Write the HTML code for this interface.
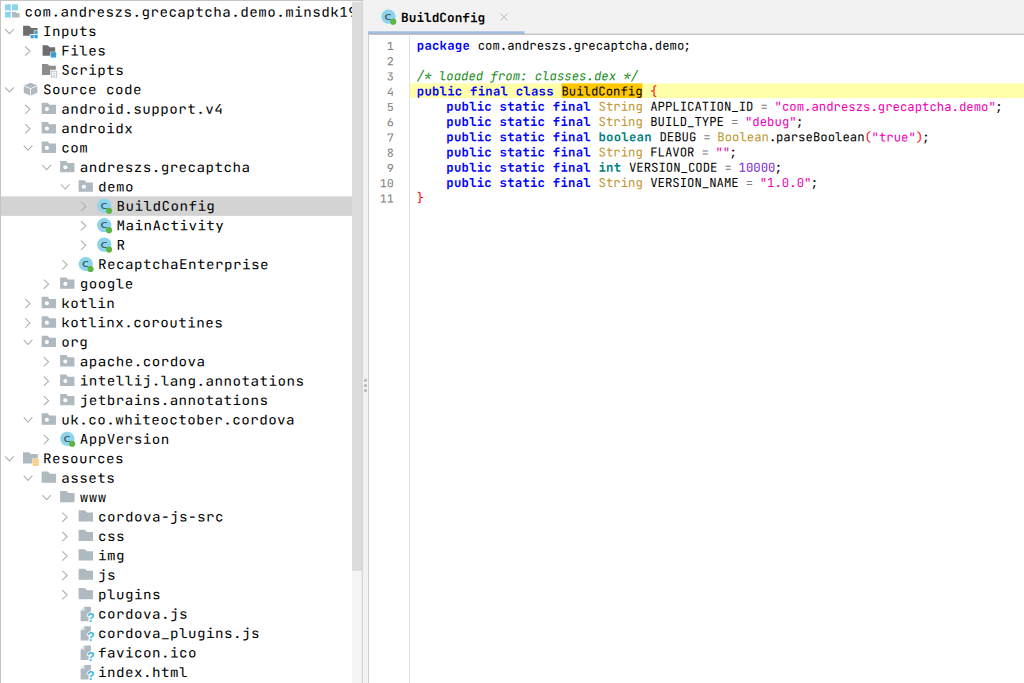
<!DOCTYPE html>
<html><head><meta charset="utf-8"><title>jadx-gui</title>
<style>
*{box-sizing:border-box;margin:0;padding:0}
html,body{width:1024px;height:683px;overflow:hidden;background:#f2f2f2}
svg{display:block;position:absolute;left:0;top:0}
text{font-family:"JetBrains Mono", "DejaVu Sans Mono", "Liberation Mono", monospace;font-variant-ligatures:none;font-feature-settings:"liga" 0,"calt" 0;fill:#000;white-space:pre}
.ig{font-family:"DejaVu Sans","Liberation Sans",sans-serif;font-size:10.4px;font-weight:normal;fill:#40535e;stroke:#40535e;stroke-width:0.1px;text-anchor:middle}
.iq{font-family:"Liberation Sans",sans-serif;font-size:12.5px;font-weight:bold;fill:#40b6e0;stroke:#fff;stroke-width:1.5px;paint-order:stroke;text-anchor:middle}
.ch{fill:none;stroke:#b0b0b0;stroke-width:1.1}
.tt text{font-size:13.4px;letter-spacing:0.426px;font-weight:380}
.tab{font-size:12.75px;font-weight:bold}
.ln{font-size:11.05px;fill:#808080;text-anchor:end}
.cl{font-size:12.3px;font-weight:370}
.k{fill:#0000ff;font-weight:bold;letter-spacing:0.23px}
.ty{fill:#bf952c;font-weight:400}
.pr{fill:#008080;font-weight:bold;letter-spacing:0.23px}
.op{fill:#808080;letter-spacing:-0.37px}
.sp{letter-spacing:-0.37px}
.st{fill:#ee00b4}
.nu{fill:#7d26cd}
.br{fill:#ff0000;letter-spacing:-0.37px}
.cm{fill:#178a17;font-style:italic}
</style></head><body>
<svg width="1024" height="683" viewBox="0 0 1024 683">
<defs><clipPath id="tc"><rect x="0" y="0" width="352" height="683"/></clipPath>
<linearGradient id="bl" x1="0" y1="0" x2="0" y2="1"><stop offset="0" stop-color="#b3cbe7"/><stop offset="1" stop-color="#8fb1da"/></linearGradient>
<linearGradient id="sh" x1="0" y1="0" x2="0" y2="1"><stop offset="0" stop-color="#f2f2f2"/><stop offset="1" stop-color="#e0e0e0"/></linearGradient></defs>
<rect x="0" y="0" width="1024" height="683" fill="#f2f2f2"/>
<g clip-path="url(#tc)"><rect x="0" y="0" width="352" height="683" fill="#fff"/>
<rect x="0" y="196.35" width="352" height="19.52" fill="#d3d3d3"/>
<g transform="translate(5.00 2.15)"><rect x="0" y="2.2" width="5.8" height="6.1" fill="#8cd3ec"/><rect x="7" y="2.2" width="6" height="6.1" fill="#8cd3ec"/><rect x="0" y="9.8" width="5.8" height="5.6" fill="#8cd3ec"/><path d="M7 9.8h3.4l1.9 1.4h2.3v4.2H7z" fill="#aeb9c0"/></g>
<g transform="translate(9.45 21.57)"><path class="ch" d="M-4.35 7.5L0 12.1L4.35 7.5"/></g>
<g transform="translate(23.20 21.57)"><path d="M-0.1 4.2h6l2.3 2.2H14.3v2.2H10.6v3.9H6.6v1.6H-0.1z" fill="#6e6e6e"/><rect x="11.15" y="9.15" width="3.3" height="3.2" fill="#389fd6"/><rect x="7.3" y="13.3" width="3.15" height="3.4" fill="#389fd6"/><rect x="11.15" y="13.3" width="3.3" height="3.4" fill="#389fd6"/></g>
<g transform="translate(28.10 40.99)"><path class="ch" d="M-2.9 5.5L1.9 10.1L-2.9 14.7"/></g>
<g transform="translate(41.67 40.99)"><path d="M0.9 4.35h4.9l2.4 1.9h5.3v4.4H8.6v4H0.9z" fill="#6e6e6e"/><rect x="9.1" y="11.15" width="5.4" height="5.4" fill="#389fd6"/></g>
<g transform="translate(41.67 60.41)"><path d="M0.3 3.5h5.2l2.4 1.8h6.3v4.1H8.5v5.1H0.3z" fill="#8c8c8c"/><rect x="9.6" y="10.75" width="5.4" height="5.9" fill="#fff" stroke="#b8c3cc" stroke-width="1"/><path d="M11.1 13h2.4M11.1 14.9h2.4" stroke="#b8c3cc" stroke-width="0.9"/></g>
<g transform="translate(9.45 79.83)"><path class="ch" d="M-4.35 7.5L0 12.1L4.35 7.5"/></g>
<g transform="translate(23.20 79.83)"><path d="M7.35 2.9L14.1 5.7V13L7.35 16L0.6 13V5.7z" fill="#aeb9c0"/><path d="M0.9 6.0L7.35 8.8L13.8 6.0M7.35 8.8V15.7" stroke="#fff" stroke-width="0.9" fill="none"/></g>
<g transform="translate(28.10 99.25)"><path class="ch" d="M-2.9 5.5L1.9 10.1L-2.9 14.7"/></g>
<g transform="translate(41.67 99.25)"><path d="M0 3.4h6.1l1.6 2.1h6.6v9.3H0z" fill="#aeb9c0"/><circle cx="5.2" cy="9.8" r="2.05" fill="#fff"/></g>
<g transform="translate(28.10 118.67)"><path class="ch" d="M-2.9 5.5L1.9 10.1L-2.9 14.7"/></g>
<g transform="translate(41.67 118.67)"><path d="M0 3.4h6.1l1.6 2.1h6.6v9.3H0z" fill="#aeb9c0"/><circle cx="5.2" cy="9.8" r="2.05" fill="#fff"/></g>
<g transform="translate(28.05 138.09)"><path class="ch" d="M-4.35 7.5L0 12.1L4.35 7.5"/></g>
<g transform="translate(41.67 138.09)"><path d="M0 3.4h6.1l1.6 2.1h6.6v9.3H0z" fill="#aeb9c0"/><circle cx="5.2" cy="9.8" r="2.05" fill="#fff"/></g>
<g transform="translate(46.65 157.51)"><path class="ch" d="M-4.35 7.5L0 12.1L4.35 7.5"/></g>
<g transform="translate(60.14 157.51)"><path d="M0 3.4h6.1l1.6 2.1h6.6v9.3H0z" fill="#aeb9c0"/><circle cx="5.2" cy="9.8" r="2.05" fill="#fff"/></g>
<g transform="translate(65.25 176.93)"><path class="ch" d="M-4.35 7.5L0 12.1L4.35 7.5"/></g>
<g transform="translate(78.61 176.93)"><path d="M0 3.4h6.1l1.6 2.1h6.6v9.3H0z" fill="#aeb9c0"/><circle cx="5.2" cy="9.8" r="2.05" fill="#fff"/></g>
<g transform="translate(83.90 196.35)"><path class="ch" d="M-2.9 5.5L1.9 10.1L-2.9 14.7"/></g>
<g transform="translate(97.08 196.35)"><circle cx="7.15" cy="9.45" r="7.15" fill="#8cd3ec"/><text class="ig" transform="translate(6.75 12.45) scale(1.2 1)">c</text><circle cx="11.95" cy="14.4" r="3.1" fill="#5fb543"/></g>
<g transform="translate(83.90 215.77)"><path class="ch" d="M-2.9 5.5L1.9 10.1L-2.9 14.7"/></g>
<g transform="translate(97.08 215.77)"><circle cx="7.15" cy="9.45" r="7.15" fill="#8cd3ec"/><text class="ig" transform="translate(6.75 12.45) scale(1.2 1)">c</text><circle cx="11.95" cy="14.4" r="3.1" fill="#5fb543"/></g>
<g transform="translate(83.90 235.19)"><path class="ch" d="M-2.9 5.5L1.9 10.1L-2.9 14.7"/></g>
<g transform="translate(97.08 235.19)"><circle cx="7.15" cy="9.45" r="7.15" fill="#8cd3ec"/><text class="ig" transform="translate(6.75 12.45) scale(1.2 1)">c</text><circle cx="11.95" cy="14.4" r="3.1" fill="#5fb543"/></g>
<g transform="translate(65.30 254.61)"><path class="ch" d="M-2.9 5.5L1.9 10.1L-2.9 14.7"/></g>
<g transform="translate(78.61 254.61)"><circle cx="7.15" cy="9.45" r="7.15" fill="#8cd3ec"/><text class="ig" transform="translate(6.75 12.45) scale(1.2 1)">c</text><circle cx="11.95" cy="14.4" r="3.1" fill="#5fb543"/></g>
<g transform="translate(46.70 274.03)"><path class="ch" d="M-2.9 5.5L1.9 10.1L-2.9 14.7"/></g>
<g transform="translate(60.14 274.03)"><path d="M0 3.4h6.1l1.6 2.1h6.6v9.3H0z" fill="#aeb9c0"/><circle cx="5.2" cy="9.8" r="2.05" fill="#fff"/></g>
<g transform="translate(28.10 293.45)"><path class="ch" d="M-2.9 5.5L1.9 10.1L-2.9 14.7"/></g>
<g transform="translate(41.67 293.45)"><path d="M0 3.4h6.1l1.6 2.1h6.6v9.3H0z" fill="#aeb9c0"/><circle cx="5.2" cy="9.8" r="2.05" fill="#fff"/></g>
<g transform="translate(28.10 312.87)"><path class="ch" d="M-2.9 5.5L1.9 10.1L-2.9 14.7"/></g>
<g transform="translate(41.67 312.87)"><path d="M0 3.4h6.1l1.6 2.1h6.6v9.3H0z" fill="#aeb9c0"/><circle cx="5.2" cy="9.8" r="2.05" fill="#fff"/></g>
<g transform="translate(28.05 332.29)"><path class="ch" d="M-4.35 7.5L0 12.1L4.35 7.5"/></g>
<g transform="translate(41.67 332.29)"><path d="M0 3.4h6.1l1.6 2.1h6.6v9.3H0z" fill="#aeb9c0"/><circle cx="5.2" cy="9.8" r="2.05" fill="#fff"/></g>
<g transform="translate(46.70 351.71)"><path class="ch" d="M-2.9 5.5L1.9 10.1L-2.9 14.7"/></g>
<g transform="translate(60.14 351.71)"><path d="M0 3.4h6.1l1.6 2.1h6.6v9.3H0z" fill="#aeb9c0"/><circle cx="5.2" cy="9.8" r="2.05" fill="#fff"/></g>
<g transform="translate(46.70 371.13)"><path class="ch" d="M-2.9 5.5L1.9 10.1L-2.9 14.7"/></g>
<g transform="translate(60.14 371.13)"><path d="M0 3.4h6.1l1.6 2.1h6.6v9.3H0z" fill="#aeb9c0"/><circle cx="5.2" cy="9.8" r="2.05" fill="#fff"/></g>
<g transform="translate(46.70 390.55)"><path class="ch" d="M-2.9 5.5L1.9 10.1L-2.9 14.7"/></g>
<g transform="translate(60.14 390.55)"><path d="M0 3.4h6.1l1.6 2.1h6.6v9.3H0z" fill="#aeb9c0"/><circle cx="5.2" cy="9.8" r="2.05" fill="#fff"/></g>
<g transform="translate(28.05 409.97)"><path class="ch" d="M-4.35 7.5L0 12.1L4.35 7.5"/></g>
<g transform="translate(41.67 409.97)"><path d="M0 3.4h6.1l1.6 2.1h6.6v9.3H0z" fill="#aeb9c0"/><circle cx="5.2" cy="9.8" r="2.05" fill="#fff"/></g>
<g transform="translate(46.70 429.39)"><path class="ch" d="M-2.9 5.5L1.9 10.1L-2.9 14.7"/></g>
<g transform="translate(60.14 429.39)"><circle cx="7.15" cy="9.45" r="7.15" fill="#8cd3ec"/><text class="ig" transform="translate(6.75 12.45) scale(1.2 1)">c</text><circle cx="11.95" cy="14.4" r="3.1" fill="#5fb543"/></g>
<g transform="translate(9.45 448.81)"><path class="ch" d="M-4.35 7.5L0 12.1L4.35 7.5"/></g>
<g transform="translate(23.20 448.81)"><path d="M-0.2 3.4h6l1.8 1.7h7v4.7H9.1v5H-0.2z" fill="#aeb9c0"/><rect x="9.5" y="9.95" width="6" height="7.05" fill="#f6cb82"/><path d="M9.5 12.3h6M9.5 14.65h6" stroke="#fbe3b8" stroke-width="0.7"/></g>
<g transform="translate(28.05 468.23)"><path class="ch" d="M-4.35 7.5L0 12.1L4.35 7.5"/></g>
<g transform="translate(41.67 468.23)"><path d="M0 3.3h6.1l2.3 2.1h6.0v9.1H0z" fill="#aeb9c0"/></g>
<g transform="translate(46.65 487.65)"><path class="ch" d="M-4.35 7.5L0 12.1L4.35 7.5"/></g>
<g transform="translate(60.14 487.65)"><path d="M0 3.3h6.1l2.3 2.1h6.0v9.1H0z" fill="#aeb9c0"/></g>
<g transform="translate(65.30 507.07)"><path class="ch" d="M-2.9 5.5L1.9 10.1L-2.9 14.7"/></g>
<g transform="translate(78.61 507.07)"><path d="M0 3.3h6.1l2.3 2.1h6.0v9.1H0z" fill="#aeb9c0"/></g>
<g transform="translate(65.30 526.49)"><path class="ch" d="M-2.9 5.5L1.9 10.1L-2.9 14.7"/></g>
<g transform="translate(78.61 526.49)"><path d="M0 3.3h6.1l2.3 2.1h6.0v9.1H0z" fill="#aeb9c0"/></g>
<g transform="translate(65.30 545.91)"><path class="ch" d="M-2.9 5.5L1.9 10.1L-2.9 14.7"/></g>
<g transform="translate(78.61 545.91)"><path d="M0 3.3h6.1l2.3 2.1h6.0v9.1H0z" fill="#aeb9c0"/></g>
<g transform="translate(65.30 565.33)"><path class="ch" d="M-2.9 5.5L1.9 10.1L-2.9 14.7"/></g>
<g transform="translate(78.61 565.33)"><path d="M0 3.3h6.1l2.3 2.1h6.0v9.1H0z" fill="#aeb9c0"/></g>
<g transform="translate(65.30 584.75)"><path class="ch" d="M-2.9 5.5L1.9 10.1L-2.9 14.7"/></g>
<g transform="translate(78.61 584.75)"><path d="M0 3.3h6.1l2.3 2.1h6.0v9.1H0z" fill="#aeb9c0"/></g>
<g transform="translate(78.61 604.17)"><path d="M6 2.6h6.3v6.4H10v8H2V6.6z" fill="#aeb9c0"/><path d="M2 6.6L6 2.6V6.6z" fill="#dde3e7"/><text class="iq" x="12.2" y="17.7">?</text></g>
<g transform="translate(78.61 623.59)"><path d="M6 2.6h6.3v6.4H10v8H2V6.6z" fill="#aeb9c0"/><path d="M2 6.6L6 2.6V6.6z" fill="#dde3e7"/><text class="iq" x="12.2" y="17.7">?</text></g>
<g transform="translate(78.61 643.01)"><path d="M6 2.6h6.3v6.4H10v8H2V6.6z" fill="#aeb9c0"/><path d="M2 6.6L6 2.6V6.6z" fill="#dde3e7"/><text class="iq" x="12.2" y="17.7">?</text></g>
<g transform="translate(78.61 662.43)"><path d="M6 2.6h6.3v6.4H10v8H2V6.6z" fill="#aeb9c0"/><path d="M2 6.6L6 2.6V6.6z" fill="#dde3e7"/><text class="iq" x="12.2" y="17.7">?</text></g>
<g class="tt"><text transform="translate(24.55 16.60) rotate(0.03) scale(1.063 1)">com.andreszs.grecaptcha.demo.minsdk19</text>
<text transform="translate(43.00 36.02) rotate(0.03) scale(1.063 1)">Inputs</text>
<text transform="translate(61.37 55.44) rotate(0.03) scale(1.063 1)">Files</text>
<text transform="translate(61.37 74.86) rotate(0.03) scale(1.063 1)">Scripts</text>
<text transform="translate(43.00 94.28) rotate(0.03) scale(1.063 1)">Source code</text>
<text transform="translate(61.37 113.70) rotate(0.03) scale(1.063 1)">android.support.v4</text>
<text transform="translate(61.37 133.12) rotate(0.03) scale(1.063 1)">androidx</text>
<text transform="translate(61.37 152.54) rotate(0.03) scale(1.063 1)">com</text>
<text transform="translate(79.74 171.96) rotate(0.03) scale(1.063 1)">andreszs.grecaptcha</text>
<text transform="translate(98.11 191.38) rotate(0.03) scale(1.063 1)">demo</text>
<text transform="translate(116.48 210.80) rotate(0.03) scale(1.063 1)">BuildConfig</text>
<text transform="translate(116.48 230.22) rotate(0.03) scale(1.063 1)">MainActivity</text>
<text transform="translate(116.48 249.64) rotate(0.03) scale(1.063 1)">R</text>
<text transform="translate(98.11 269.06) rotate(0.03) scale(1.063 1)">RecaptchaEnterprise</text>
<text transform="translate(79.74 288.48) rotate(0.03) scale(1.063 1)">google</text>
<text transform="translate(61.37 307.90) rotate(0.03) scale(1.063 1)">kotlin</text>
<text transform="translate(61.37 327.32) rotate(0.03) scale(1.063 1)">kotlinx.coroutines</text>
<text transform="translate(61.37 346.74) rotate(0.03) scale(1.063 1)">org</text>
<text transform="translate(79.74 366.16) rotate(0.03) scale(1.063 1)">apache.cordova</text>
<text transform="translate(79.74 385.58) rotate(0.03) scale(1.063 1)">intellij.lang.annotations</text>
<text transform="translate(79.74 405.00) rotate(0.03) scale(1.063 1)">jetbrains.annotations</text>
<text transform="translate(61.37 424.42) rotate(0.03) scale(1.063 1)">uk.co.whiteoctober.cordova</text>
<text transform="translate(79.74 443.84) rotate(0.03) scale(1.063 1)">AppVersion</text>
<text transform="translate(43.00 463.26) rotate(0.03) scale(1.063 1)">Resources</text>
<text transform="translate(61.37 482.68) rotate(0.03) scale(1.063 1)">assets</text>
<text transform="translate(79.74 502.10) rotate(0.03) scale(1.063 1)">www</text>
<text transform="translate(98.11 521.52) rotate(0.03) scale(1.063 1)">cordova-js-src</text>
<text transform="translate(98.11 540.94) rotate(0.03) scale(1.063 1)">css</text>
<text transform="translate(98.11 560.36) rotate(0.03) scale(1.063 1)">img</text>
<text transform="translate(98.11 579.78) rotate(0.03) scale(1.063 1)">js</text>
<text transform="translate(98.11 599.20) rotate(0.03) scale(1.063 1)">plugins</text>
<text transform="translate(98.11 618.62) rotate(0.03) scale(1.063 1)">cordova.js</text>
<text transform="translate(98.11 638.04) rotate(0.03) scale(1.063 1)">cordova_plugins.js</text>
<text transform="translate(98.11 657.46) rotate(0.03) scale(1.063 1)">favicon.ico</text>
<text transform="translate(98.11 676.88) rotate(0.03) scale(1.063 1)">index.html</text></g></g>
<rect x="0" y="0" width="363" height="1" fill="#c4c4c4"/>
<rect x="0" y="0" width="1" height="683" fill="#c4c4c4"/>
<rect x="352" y="1" width="10" height="682" fill="#f5f5f5"/>
<rect x="352" y="2" width="10" height="569" fill="#dcdcdc"/>
<rect x="361.6" y="1" width="1.2" height="682" fill="#d0d0d0"/>
<circle cx="365.5" cy="380.3" r="1.5" fill="#b4b4b4"/><circle cx="365.5" cy="385.4" r="1.5" fill="#b4b4b4"/><circle cx="365.5" cy="390.5" r="1.5" fill="#b4b4b4"/>
<rect x="368" y="32.4" width="656" height="1.6" fill="url(#sh)"/>
<rect x="368" y="31.1" width="156.6" height="3.1" fill="url(#bl)"/>
<rect x="368" y="33.8" width="656" height="1.4" fill="#c4c4c4"/>
<rect x="368" y="35" width="656" height="648" fill="#fff"/>
<rect x="368" y="34.2" width="1" height="649" fill="#cfcfcf"/>
<rect x="409" y="35" width="1" height="648" fill="#e2e2e2"/>
<rect x="410" y="83.4" width="614" height="14.65" fill="#ffffaa"/>
<rect x="561.6" y="83.4" width="80.7" height="14.65" fill="#ffc800"/>
<g transform="translate(381.3 7.25)"><circle cx="7.15" cy="9.45" r="7.15" fill="#8cd3ec"/><text class="ig" transform="translate(6.75 12.45) scale(1.2 1)">c</text><circle cx="11.95" cy="14.4" r="3.1" fill="#5fb543"/></g>
<text class="tab" transform="translate(401.1 22.1) rotate(0.03)">BuildConfig</text>
<path d="M500.5 13.7L507.5 20.7M507.5 13.7L500.5 20.7" stroke="#b4b4b4" stroke-width="1" fill="none"/>
<text class="ln" transform="translate(393.9 50.05) rotate(0.03) scale(1.07 1)">1</text>
<text class="cl" transform="translate(416.8 49.70) rotate(0.03)" xml:space="preserve"><tspan class="k">package </tspan>com.andreszs.grecaptcha.demo<tspan class="sp" dx="-0.7">;</tspan></text>
<text class="ln" transform="translate(393.9 65.29) rotate(0.03) scale(1.07 1)">2</text>
<text class="ln" transform="translate(393.9 80.53) rotate(0.03) scale(1.07 1)">3</text>
<text class="cl" transform="translate(416.8 80.18) rotate(0.03)" xml:space="preserve"><tspan class="cm">/* loaded from: classes.dex */</tspan></text>
<text class="ln" transform="translate(393.9 95.77) rotate(0.03) scale(1.07 1)">4</text>
<text class="cl" transform="translate(416.8 95.42) rotate(0.03)" xml:space="preserve"><tspan class="k">public </tspan><tspan class="k">final </tspan><tspan class="k">class </tspan>BuildConfig <tspan class="br">{</tspan></text>
<text class="ln" transform="translate(393.9 111.01) rotate(0.03) scale(1.07 1)">5</text>
<text class="cl" transform="translate(416.8 110.66) rotate(0.03)" xml:space="preserve">    <tspan class="k">public </tspan><tspan class="k">static </tspan><tspan class="k">final </tspan><tspan class="ty">String</tspan> APPLICATION_ID<tspan class="op"> = </tspan><tspan class="st">&quot;com.andreszs.grecaptcha.demo&quot;</tspan><tspan class="sp" dx="-0.7">;</tspan></text>
<text class="ln" transform="translate(393.9 126.25) rotate(0.03) scale(1.07 1)">6</text>
<text class="cl" transform="translate(416.8 125.90) rotate(0.03)" xml:space="preserve">    <tspan class="k">public </tspan><tspan class="k">static </tspan><tspan class="k">final </tspan><tspan class="ty">String</tspan> BUILD_TYPE<tspan class="op"> = </tspan><tspan class="st">&quot;debug&quot;</tspan><tspan class="sp" dx="-0.7">;</tspan></text>
<text class="ln" transform="translate(393.9 141.49) rotate(0.03) scale(1.07 1)">7</text>
<text class="cl" transform="translate(416.8 141.14) rotate(0.03)" xml:space="preserve">    <tspan class="k">public </tspan><tspan class="k">static </tspan><tspan class="k">final </tspan><tspan class="pr">boolean </tspan>DEBUG<tspan class="op"> = </tspan><tspan class="ty">Boolean</tspan><tspan class="sp">.</tspan>parseBoolean<tspan class="br">(</tspan><tspan class="st">&quot;true&quot;</tspan><tspan class="br">)</tspan><tspan class="sp" dx="-0.7">;</tspan></text>
<text class="ln" transform="translate(393.9 156.73) rotate(0.03) scale(1.07 1)">8</text>
<text class="cl" transform="translate(416.8 156.38) rotate(0.03)" xml:space="preserve">    <tspan class="k">public </tspan><tspan class="k">static </tspan><tspan class="k">final </tspan><tspan class="ty">String</tspan> FLAVOR<tspan class="op"> = </tspan><tspan class="st">&quot;&quot;</tspan><tspan class="sp" dx="-0.7">;</tspan></text>
<text class="ln" transform="translate(393.9 171.97) rotate(0.03) scale(1.07 1)">9</text>
<text class="cl" transform="translate(416.8 171.62) rotate(0.03)" xml:space="preserve">    <tspan class="k">public </tspan><tspan class="k">static </tspan><tspan class="k">final </tspan><tspan class="pr">int </tspan>VERSION_CODE<tspan class="op"> = </tspan><tspan class="nu">10000</tspan><tspan class="sp" dx="-0.7">;</tspan></text>
<text class="ln" transform="translate(393.9 187.21) rotate(0.03) scale(1.07 1)">10</text>
<text class="cl" transform="translate(416.8 186.86) rotate(0.03)" xml:space="preserve">    <tspan class="k">public </tspan><tspan class="k">static </tspan><tspan class="k">final </tspan><tspan class="ty">String</tspan> VERSION_NAME<tspan class="op"> = </tspan><tspan class="st">&quot;1.0.0&quot;</tspan><tspan class="sp" dx="-0.7">;</tspan></text>
<text class="ln" transform="translate(393.9 202.45) rotate(0.03) scale(1.07 1)">11</text>
<text class="cl" transform="translate(416.8 202.10) rotate(0.03)" xml:space="preserve"><tspan class="br">}</tspan></text>
</svg>
</body></html>
